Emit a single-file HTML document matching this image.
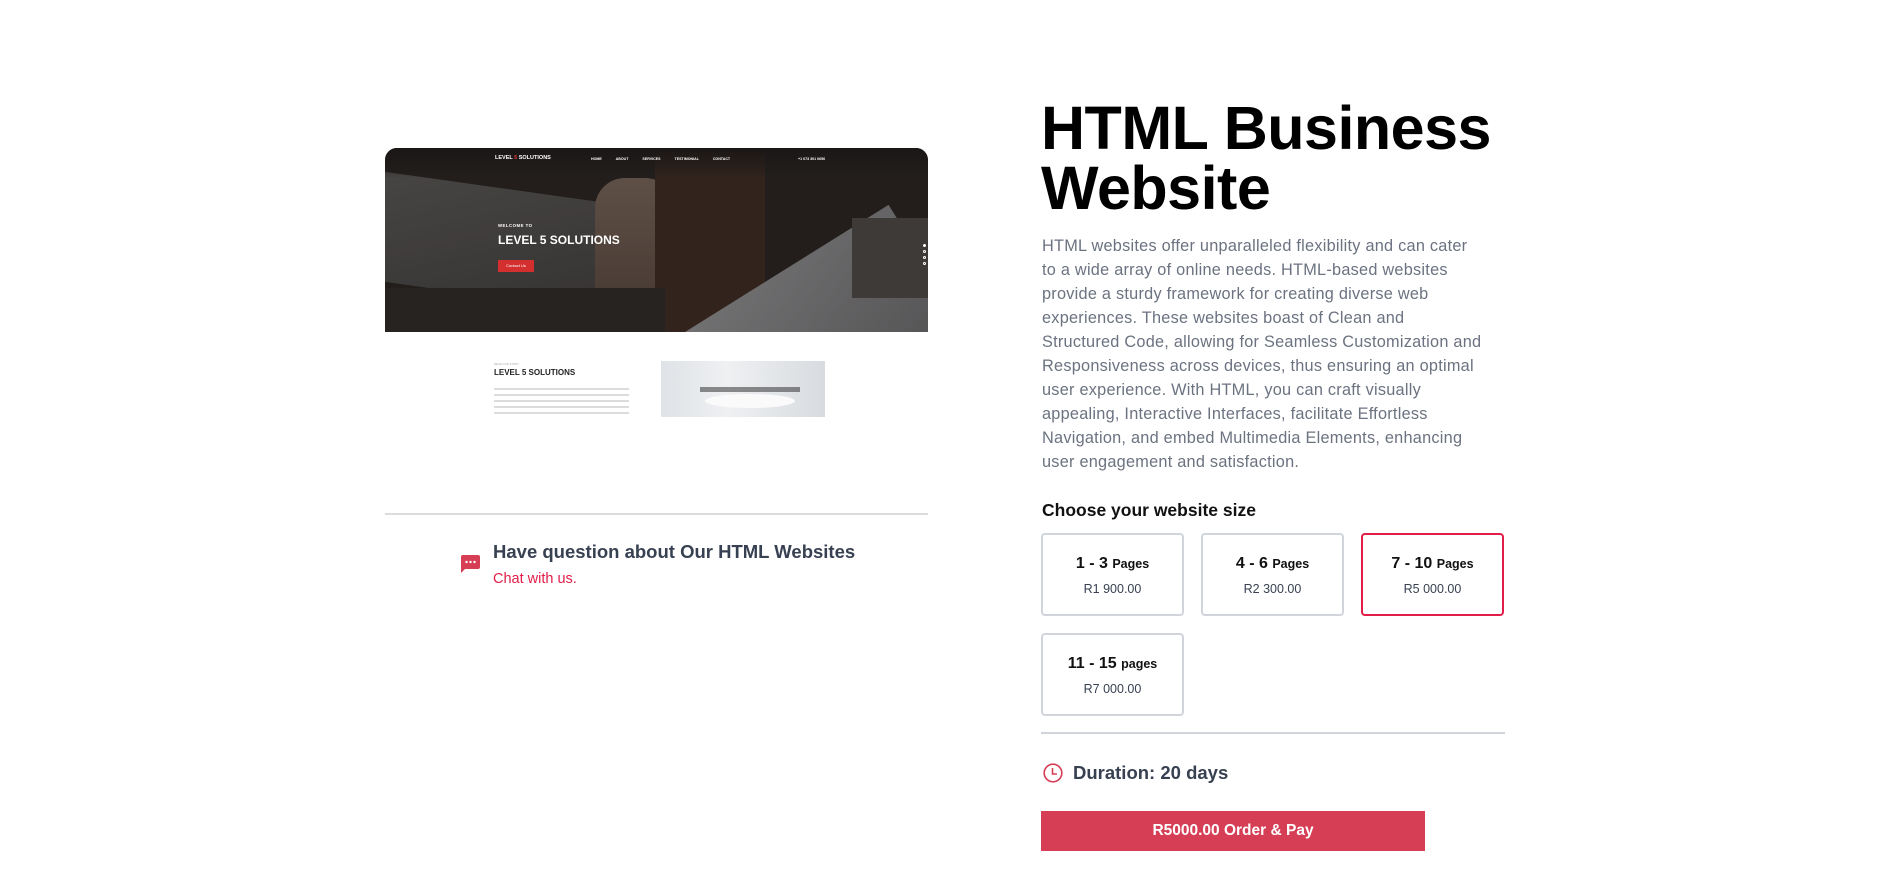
<!DOCTYPE html>
<html><head><meta charset="utf-8">
<style>
*{margin:0;padding:0;box-sizing:border-box}
body{width:1891px;height:895px;background:#fff;font-family:"Liberation Sans",Arial,sans-serif;position:relative;overflow:hidden}
.abs{position:absolute}
.hero{left:385px;top:148px;width:543px;height:184px;border-radius:12px 12px 0 0;overflow:hidden;background:#2a2522}
.lower{left:385px;top:332px;width:543px;height:85px;background:#fff;overflow:hidden}
.w{color:#fff;font-weight:bold;white-space:nowrap}
h1{position:absolute;left:1041px;top:98px;font-size:61px;line-height:60px;font-weight:bold;color:#000;letter-spacing:-0.5px}
.desc{position:absolute;left:1042px;top:234px;font-size:16.3px;line-height:24px;color:#6b7280;white-space:nowrap;letter-spacing:.25px}
.card{position:absolute;width:143px;height:83px;border:2px solid #d1d5db;border-radius:4px;text-align:center}
.card .t{margin-top:20px;font-size:16px;font-weight:bold;color:#111}
.card .t span{font-size:12.5px}
.card .p{margin-top:9px;font-size:12.5px;color:#374151}
</style></head><body>

<div class="abs hero">
  <div class="abs" style="left:0;top:40px;width:230px;height:110px;background:linear-gradient(160deg,#5e5c5b,#444241);transform:skewY(8deg)"></div>
  <div class="abs" style="left:210px;top:30px;width:80px;height:130px;background:linear-gradient(#7f6b5e,#5f4d42);border-radius:30px 30px 10px 10px"></div>
  <div class="abs" style="left:270px;top:0;width:110px;height:184px;background:#3f2c22"></div>
  <div class="abs" style="left:0;top:0;width:543px;height:30px;background:linear-gradient(#1d1a19,rgba(29,26,25,0))"></div>
  <div class="abs" style="left:300px;top:184px;width:240px;height:150px;background:linear-gradient(160deg,#9a9a9c,#6e6e70);transform:rotate(-32deg);transform-origin:0 0"></div>
  <div class="abs" style="left:467px;top:70px;width:76px;height:80px;background:#504c4a"></div>
  <div class="abs" style="left:0;top:140px;width:280px;height:44px;background:#2f2b29"></div>
  <div class="abs" style="left:0;top:0;width:543px;height:184px;background:rgba(20,18,18,.3)"></div>
  <div class="abs w" style="left:110px;top:7px;font-size:5.5px">LEVEL <span style="color:#e53935">5</span> SOLUTIONS</div>
  <div class="abs w" style="left:206px;top:9px;font-size:3.6px;word-spacing:13px">HOME ABOUT SERVICES TESTIMONIAL CONTACT</div>
  <div class="abs w" style="left:413px;top:9px;font-size:3.6px">+1 073 301 0656</div>
  <div class="abs w" style="left:113px;top:75px;font-size:4.3px;letter-spacing:.5px">WELCOME TO</div>
  <div class="abs w" style="left:113px;top:85px;font-size:12px">LEVEL 5 SOLUTIONS</div>
  <div class="abs" style="left:113px;top:112px;width:36px;height:12px;background:#d32f2f;color:#fff;font-size:4px;line-height:12px;text-align:center">Contact Us</div>
  <div class="abs" style="left:538px;top:96px;width:3px;height:3px;border-radius:50%;background:#fff"></div>
  <div class="abs" style="left:538px;top:102px;width:3px;height:3px;border-radius:50%;border:.5px solid #fff"></div>
  <div class="abs" style="left:538px;top:108px;width:3px;height:3px;border-radius:50%;border:.5px solid #fff"></div>
  <div class="abs" style="left:538px;top:114px;width:3px;height:3px;border-radius:50%;border:.5px solid #fff"></div>
</div>
<div class="abs lower">
  <div class="abs" style="left:109px;top:30px;font-size:2.8px;color:#aaa">READ OUR STORY</div>
  <div class="abs" style="left:109px;top:36px;font-size:8px;font-weight:bold;color:#222;white-space:nowrap">LEVEL 5 SOLUTIONS</div>
  <div class="abs" style="left:109px;top:56px;width:135px;height:2px;background:#dcdcdc;box-shadow:0 6px 0 #dcdcdc,0 12px 0 #dcdcdc,0 18px 0 #dcdcdc,0 24px 0 #dcdcdc"></div>
  <div class="abs" style="left:276px;top:29px;width:164px;height:56px;background:linear-gradient(90deg,#dfe2e6,#eef0f2 40%,#d8dbdf)"></div>
  <div class="abs" style="left:320px;top:62px;width:90px;height:14px;border-radius:50%;background:#fafafa"></div>
  <div class="abs" style="left:315px;top:55px;width:100px;height:5px;background:#333;opacity:.55"></div>
</div>

<div class="abs" style="left:385px;top:513px;width:543px;height:2px;background:#dcdcdc"></div>
<svg class="abs" style="left:461px;top:555px" width="19" height="19" viewBox="0 0 19 19"><path d="M2 0h15a2 2 0 0 1 2 2v10a2 2 0 0 1-2 2H4l-4 4V2a2 2 0 0 1 2-2z" fill="#d63e55"/><circle cx="5.5" cy="7" r="1.2" fill="#fff"/><circle cx="9.5" cy="7" r="1.2" fill="#fff"/><circle cx="13.5" cy="7" r="1.2" fill="#fff"/></svg>
<div class="abs" style="left:493px;top:541px;font-size:18.5px;font-weight:bold;color:#374151;white-space:nowrap">Have question about Our HTML Websites</div>
<div class="abs" style="left:493px;top:571px;font-size:14.5px;color:#e11d48">Chat with us.</div>

<h1>HTML Business<br>Website</h1>
<div class="desc">HTML websites offer unparalleled flexibility and can cater<br>to a wide array of online needs. HTML-based websites<br>provide a sturdy framework for creating diverse web<br>experiences. These websites boast of Clean and<br>Structured Code, allowing for Seamless Customization and<br>Responsiveness across devices, thus ensuring an optimal<br>user experience. With HTML, you can craft visually<br>appealing, Interactive Interfaces, facilitate Effortless<br>Navigation, and embed Multimedia Elements, enhancing<br>user engagement and satisfaction.</div>

<div class="abs" style="left:1042px;top:500px;font-size:17.5px;font-weight:bold;color:#111">Choose your website size</div>
<div class="card" style="left:1041px;top:533px"><div class="t">1 - 3 <span>Pages</span></div><div class="p">R1 900.00</div></div>
<div class="card" style="left:1201px;top:533px"><div class="t">4 - 6 <span>Pages</span></div><div class="p">R2 300.00</div></div>
<div class="card" style="left:1361px;top:533px;border-color:#e11d48"><div class="t">7 - 10 <span>Pages</span></div><div class="p">R5 000.00</div></div>
<div class="card" style="left:1041px;top:633px"><div class="t">11 - 15 <span>pages</span></div><div class="p">R7 000.00</div></div>

<div class="abs" style="left:1041px;top:732px;width:464px;height:2px;background:#d1d5db"></div>
<svg class="abs" style="left:1043px;top:763px" width="20" height="20" viewBox="0 0 20 20"><circle cx="10" cy="10" r="8.8" fill="none" stroke="#d63e55" stroke-width="1.6"/><path d="M9.5 5v6h4.5" fill="none" stroke="#d63e55" stroke-width="1.6"/></svg>
<div class="abs" style="left:1073px;top:762px;font-size:18.5px;font-weight:bold;color:#374151">Duration: 20 days</div>

<div class="abs" style="left:1041px;top:811px;width:384px;height:40px;background:#d63e55;color:#fff;font-size:15.5px;font-weight:bold;text-align:center;line-height:40px">R5000.00 Order &amp; Pay</div>
</body></html>
